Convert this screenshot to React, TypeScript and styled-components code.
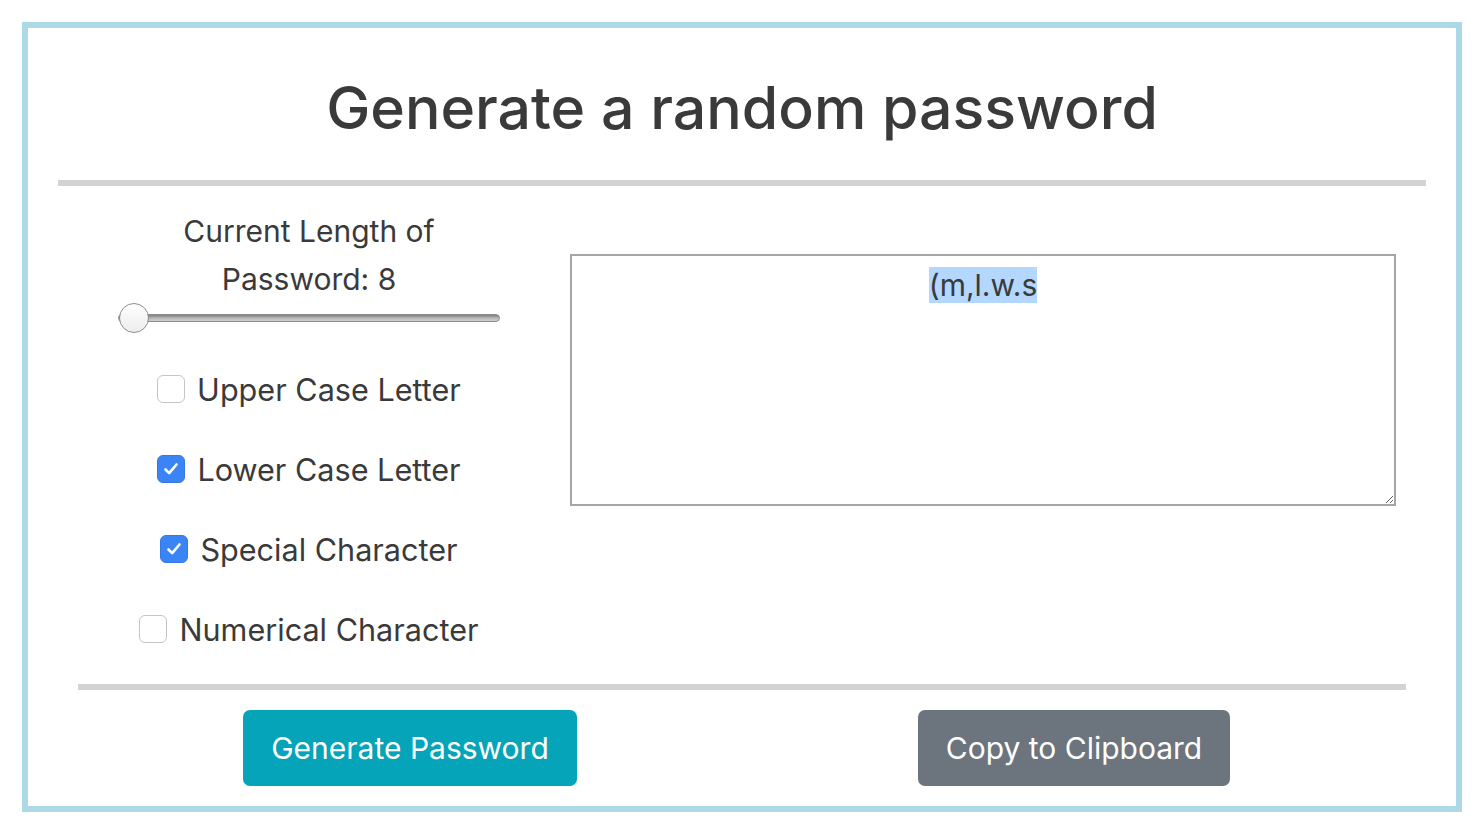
import React, { useEffect, useRef } from "react";
import styled, { createGlobalStyle } from "styled-components";

const GlobalStyle = createGlobalStyle`
  html, body { margin: 0; padding: 0; background: #ffffff; }
  body { font-family: Inter, "Noto Sans", "Liberation Sans", sans-serif; color: #3a3a3a; }
  * { box-sizing: border-box; }
`;

const Card = styled.div`
  margin: 22px 0 0 22px;
  width: 1440px;
  border: 6px solid #add8e6;
  display: flex;
  flex-direction: column;
`;

const Header = styled.header`
  padding: 42px 0 34px;
  text-align: center;
`;

const Title = styled.h1`
  margin: 0;
  font-size: 59px;
  line-height: 76px;
  font-weight: 500;
  color: #3a3a3a;
`;

const Rule = styled.div<{ $inset: number }>`
  height: 6px;
  margin: 0 ${(p) => p.$inset}px;
  background: #d3d3d3;
`;

const Main = styled.section`
  display: flex;
  padding: 0 60px 0 50px;
  gap: 30px;
`;

const Controls = styled.div`
  width: 462px;
  display: flex;
  flex-direction: column;
  align-items: center;
  padding: 21px 0 15px;
`;

const LengthLabel = styled.label`
  font-size: 30px;
  line-height: 48px;
  text-align: center;
  width: 300px;
`;

const Range = styled.input`
  -webkit-appearance: none;
  appearance: none;
  width: 382px;
  height: 30px;
  margin: 0 0 16px;
  background: transparent;

  &::-webkit-slider-runnable-track {
    height: 8px;
    border-radius: 4px;
    background: linear-gradient(#7f7f7f, #bdbdbd 60%, #d0d0d0);
    border: 1px solid #8c8c8c;
  }
  &::-webkit-slider-thumb {
    -webkit-appearance: none;
    appearance: none;
    width: 30px;
    height: 30px;
    border-radius: 50%;
    background: linear-gradient(#ffffff, #ececec);
    border: 1.5px solid #8e8e8e;
    margin-top: -12px;
  }
`;

const OptionRow = styled.label`
  height: 80px;
  display: flex;
  align-items: center;
  gap: 12px;
  font-size: 30.6px;
  color: #3a3a3a;
  cursor: pointer;
`;

const HiddenInput = styled.input`
  position: absolute;
  opacity: 0;
  width: 0;
  height: 0;
  margin: 0;
`;

const Box = styled.span<{ $checked: boolean }>`
  width: 28px;
  height: 28px;
  border-radius: 6px;
  display: inline-flex;
  align-items: center;
  justify-content: center;
  flex: none;
  background: ${(p) => (p.$checked ? "#3b84f5" : "#ffffff")};
  border: ${(p) => (p.$checked ? "1px solid #3479ea" : "1.5px solid #c4c4c4")};
`;

const TextBox = styled.textarea`
  margin-top: 68px;
  width: 826px;
  height: 252px;
  border: 2px solid #a6a6a6;
  padding: 12px 10px;
  font-family: Inter, "Noto Sans", "Liberation Sans", sans-serif;
  font-size: 30px;
  line-height: 34px;
  color: #3a3a3a;
  text-align: center;
  resize: both;
  outline: none;
  background: #ffffff;

  &::selection {
    background: #b3d7ff;
    color: #3a3a3a;
  }
`;

const Footer = styled.footer`
  display: grid;
  grid-template-columns: 1fr 1fr;
  margin: 0 50px;
  padding: 20px 0;
`;

const FooterCell = styled.div`
  display: flex;
  justify-content: center;
`;

const Button = styled.button<{ $variant: "info" | "secondary" }>`
  height: 76px;
  padding: 0 28px;
  border: none;
  border-radius: 7px;
  font-family: Inter, "Noto Sans", "Liberation Sans", sans-serif;
  font-size: 30px;
  color: #ffffff;
  background: ${(p) => (p.$variant === "info" ? "#05a4b8" : "#6c757d")};
  cursor: pointer;
`;

const Check = () => (
  <svg width="18" height="18" viewBox="0 0 18 18" aria-hidden="true">
    <path d="M3.5 9.5 L7.2 13.2 L14.5 4.5" fill="none" stroke="#ffffff" strokeWidth="2.6" strokeLinecap="round" strokeLinejoin="round" />
  </svg>
);

const options = [
  { label: "Upper Case Letter", checked: false },
  { label: "Lower Case Letter", checked: true },
  { label: "Special Character", checked: true },
  { label: "Numerical Character", checked: false },
];

export default function App() {
  const ref = useRef<HTMLTextAreaElement>(null);
  const value = "(m,l.w.s";

  useEffect(() => {
    const el = ref.current;
    if (el) {
      el.focus();
      el.setSelectionRange(0, value.length);
    }
  }, []);

  return (
    <>
      <GlobalStyle />
      <Card>
        <Header>
          <Title>Generate a random password</Title>
        </Header>
        <Rule $inset={30} />
        <Main>
          <Controls>
            <LengthLabel htmlFor="len">Current Length of Password: 8</LengthLabel>
            <Range id="len" type="range" min={8} max={128} defaultValue={8} />
            {options.map((o) => (
              <OptionRow key={o.label}>
                <HiddenInput type="checkbox" defaultChecked={o.checked} />
                <Box $checked={o.checked}>{o.checked && <Check />}</Box>
                {o.label}
              </OptionRow>
            ))}
          </Controls>
          <TextBox ref={ref} defaultValue={value} readOnly />
        </Main>
        <Rule $inset={50} />
        <Footer>
          <FooterCell>
            <Button $variant="info">Generate Password</Button>
          </FooterCell>
          <FooterCell>
            <Button $variant="secondary">Copy to Clipboard</Button>
          </FooterCell>
        </Footer>
      </Card>
    </>
  );
}
